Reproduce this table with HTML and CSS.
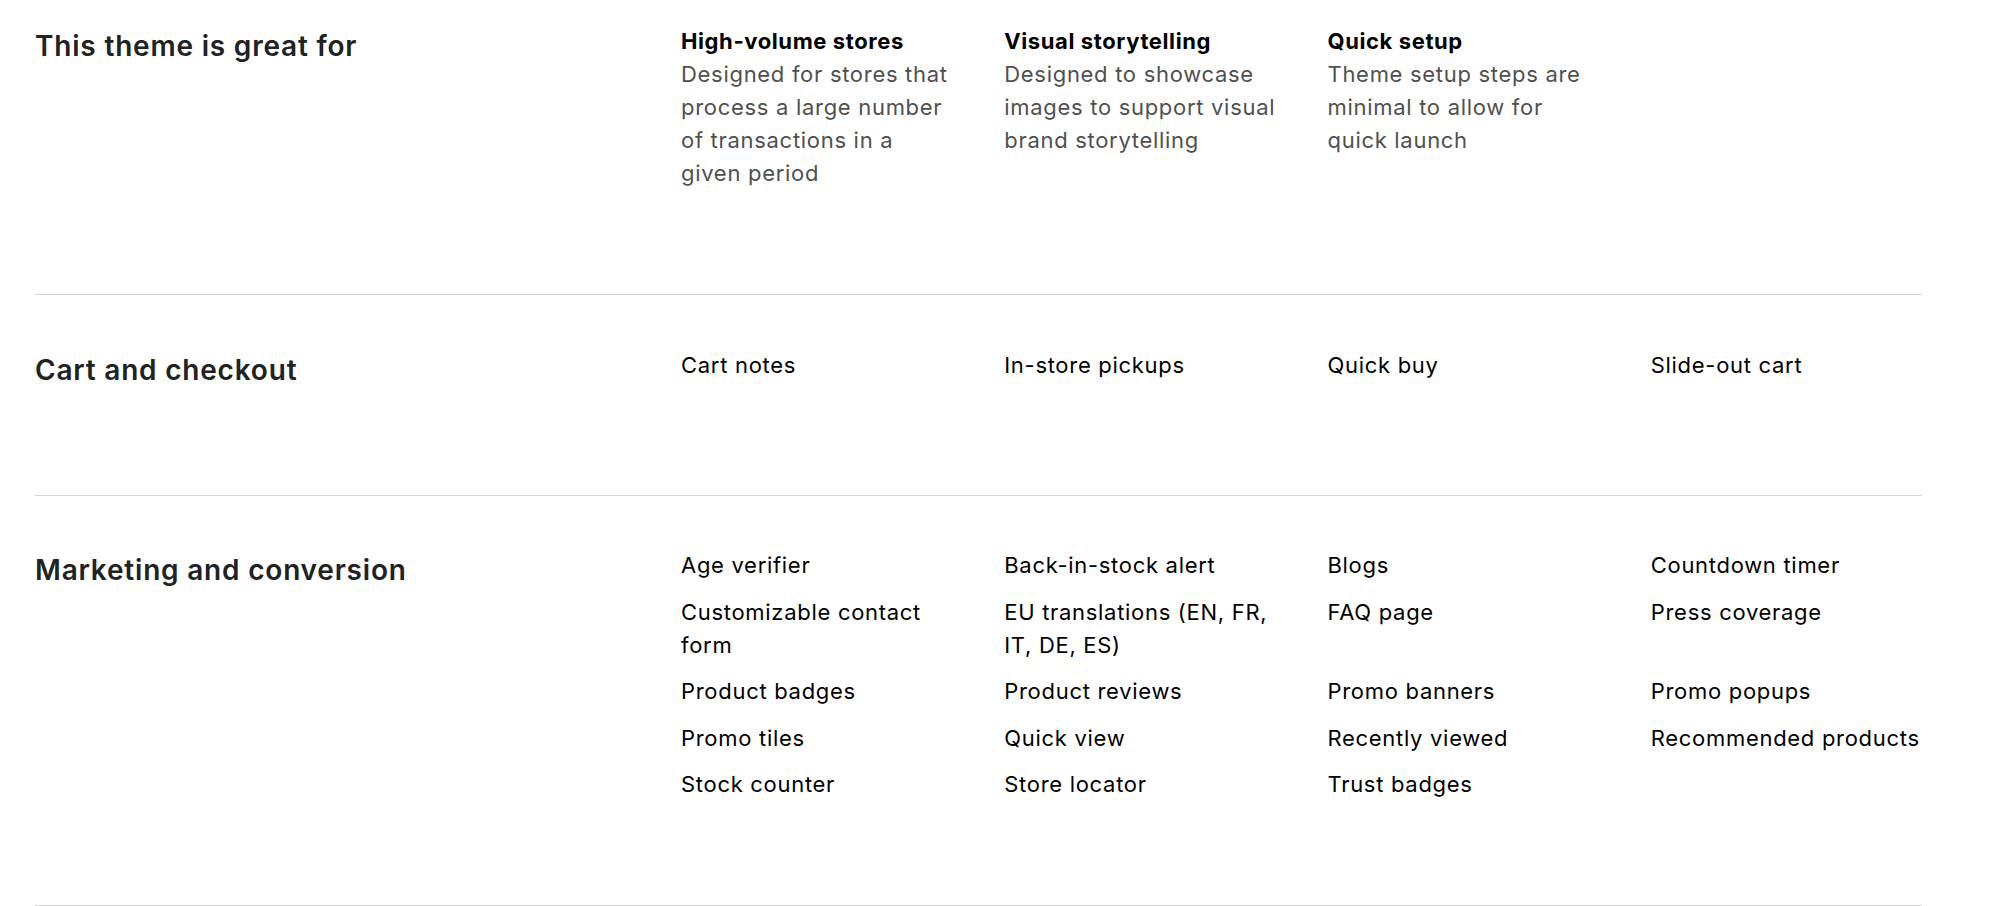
FILE: index.html
```html
<!DOCTYPE html>
<html lang="en">
<head>
<meta charset="utf-8">
<title>Theme features</title>
<link rel="stylesheet" href="styles.css">
</head>
<body>
<main class="features">
  <section class="feature-row feature-row--first">
    <h2 class="feature-row__title">This theme is great for</h2>
    <ul class="feature-grid">
      <li class="highlight">
        <h3 class="highlight__title">High-volume stores</h3>
        <p class="highlight__text">Designed for stores that process a large number of transactions in a given period</p>
      </li>
      <li class="highlight">
        <h3 class="highlight__title">Visual storytelling</h3>
        <p class="highlight__text">Designed to showcase images to support visual brand storytelling</p>
      </li>
      <li class="highlight">
        <h3 class="highlight__title">Quick setup</h3>
        <p class="highlight__text">Theme setup steps are minimal to allow for quick launch</p>
      </li>
    </ul>
  </section>

  <section class="feature-row">
    <h2 class="feature-row__title">Cart and checkout</h2>
    <ul class="feature-grid">
      <li class="feature">Cart notes</li>
      <li class="feature">In-store pickups</li>
      <li class="feature">Quick buy</li>
      <li class="feature">Slide-out cart</li>
    </ul>
  </section>

  <section class="feature-row">
    <h2 class="feature-row__title">Marketing and conversion</h2>
    <ul class="feature-grid">
      <li class="feature">Age verifier</li>
      <li class="feature">Back-in-stock alert</li>
      <li class="feature">Blogs</li>
      <li class="feature">Countdown timer</li>
      <li class="feature">Customizable contact form</li>
      <li class="feature">EU translations (EN, FR, IT, DE, ES)</li>
      <li class="feature">FAQ page</li>
      <li class="feature">Press coverage</li>
      <li class="feature">Product badges</li>
      <li class="feature">Product reviews</li>
      <li class="feature">Promo banners</li>
      <li class="feature">Promo popups</li>
      <li class="feature">Promo tiles</li>
      <li class="feature">Quick view</li>
      <li class="feature">Recently viewed</li>
      <li class="feature">Recommended products</li>
      <li class="feature">Stock counter</li>
      <li class="feature">Store locator</li>
      <li class="feature">Trust badges</li>
    </ul>
  </section>
</main>
</body>
</html>
```

FILE: styles.css
```css
* {
  box-sizing: border-box;
}

html, body {
  margin: 0;
  padding: 0;
  background: #ffffff;
}

body {
  font-family: "Inter", "Noto Sans", "Liberation Sans", sans-serif;
  color: #000000;
  -webkit-font-smoothing: antialiased;
}

.features {
  width: 1887px;
  margin-left: 35px;
}

.feature-row {
  display: flex;
  align-items: flex-start;
  padding: 53.5px 0 104px;
  border-bottom: 1px solid #d4d4d4;
}

.feature-row--first {
  padding-top: 25px;
}

.feature-row__title {
  flex: 0 0 646px;
  margin: 0;
  font-size: 28px;
  line-height: 42px;
  font-weight: 600;
  letter-spacing: 0.8px;
  color: #202223;
}

.feature-grid {
  flex: 1;
  display: grid;
  grid-template-columns: repeat(4, 1fr);
  column-gap: 52px;
  row-gap: 13.5px;
  margin: 0;
  padding: 0;
  list-style: none;
}

.feature {
  font-size: 22px;
  line-height: 33px;
  font-weight: 400;
  letter-spacing: 0.7px;
  color: #000000;
}

.highlight__title {
  margin: 0;
  font-size: 22px;
  line-height: 33px;
  font-weight: 700;
  letter-spacing: 0.6px;
  color: #000000;
}

.highlight__text {
  margin: 0;
  font-size: 22px;
  line-height: 33px;
  font-weight: 400;
  letter-spacing: 0.7px;
  color: #505050;
}
```
